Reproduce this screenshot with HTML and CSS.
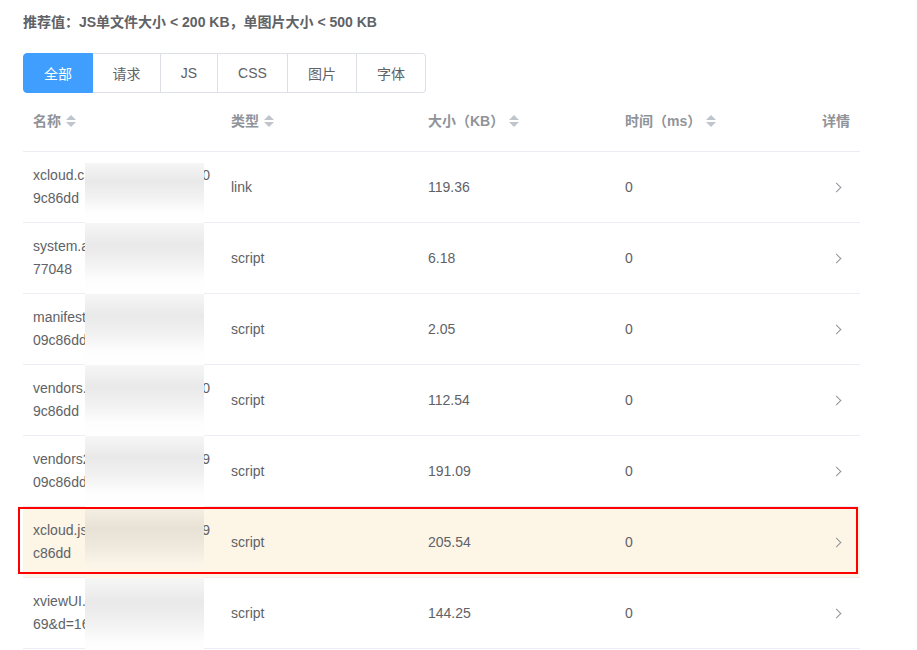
FILE: index.html
```html
<!DOCTYPE html>
<html lang="zh-CN">
<head>
    <meta charset="UTF-8">
    <title>资源列表</title>
    <link rel="stylesheet" href="styles.css">
</head>
<body>
    <div class="page">
        <p class="tip">推荐值：JS单文件大小 &lt; 200 KB，单图片大小 &lt; 500 KB</p>

        <div class="tabs">
            <button class="tab active">全部</button>
            <button class="tab">请求</button>
            <button class="tab">JS</button>
            <button class="tab">CSS</button>
            <button class="tab">图片</button>
            <button class="tab">字体</button>
        </div>

        <div class="table">
            <div class="row head">
                <div class="cell">名称 <span class="sort"></span></div>
                <div class="cell">类型 <span class="sort"></span></div>
                <div class="cell">大小（KB） <span class="sort"></span></div>
                <div class="cell">时间（ms） <span class="sort"></span></div>
                <div class="cell detail">详情</div>
            </div>

            <div class="row first">
                <div class="cell name"><div class="line"><span>xcloud.c</span><span>0</span></div><div class="line">9c86dd</div><span class="mask"></span></div>
                <div class="cell">link</div>
                <div class="cell">119.36</div>
                <div class="cell">0</div>
                <div class="cell detail"><span class="arrow"></span></div>
            </div>
            <div class="row">
                <div class="cell name"><div class="line"><span>system.a</span><span></span></div><div class="line">77048</div><span class="mask"></span></div>
                <div class="cell">script</div>
                <div class="cell">6.18</div>
                <div class="cell">0</div>
                <div class="cell detail"><span class="arrow"></span></div>
            </div>
            <div class="row">
                <div class="cell name"><div class="line"><span>manifest</span><span></span></div><div class="line">09c86dd</div><span class="mask"></span></div>
                <div class="cell">script</div>
                <div class="cell">2.05</div>
                <div class="cell">0</div>
                <div class="cell detail"><span class="arrow"></span></div>
            </div>
            <div class="row">
                <div class="cell name"><div class="line"><span>vendors.</span><span>0</span></div><div class="line">9c86dd</div><span class="mask"></span></div>
                <div class="cell">script</div>
                <div class="cell">112.54</div>
                <div class="cell">0</div>
                <div class="cell detail"><span class="arrow"></span></div>
            </div>
            <div class="row">
                <div class="cell name"><div class="line"><span>vendors2</span><span>9</span></div><div class="line">09c86dd</div><span class="mask"></span></div>
                <div class="cell">script</div>
                <div class="cell">191.09</div>
                <div class="cell">0</div>
                <div class="cell detail"><span class="arrow"></span></div>
            </div>
            <div class="row warn">
                <div class="cell name"><div class="line"><span>xcloud.js</span><span>9</span></div><div class="line">c86dd</div><span class="mask"></span></div>
                <div class="cell">script</div>
                <div class="cell">205.54</div>
                <div class="cell">0</div>
                <div class="cell detail"><span class="arrow"></span></div>
            </div>
            <div class="row">
                <div class="cell name"><div class="line"><span>xviewUI.</span><span></span></div><div class="line">69&amp;d=16</div><span class="mask"></span></div>
                <div class="cell">script</div>
                <div class="cell">144.25</div>
                <div class="cell">0</div>
                <div class="cell detail"><span class="arrow"></span></div>
            </div>
        </div>
    </div>
</body>
</html>
```

FILE: styles.css
```css
body {
    margin: 0;
    background: #fff;
    font-family: "Liberation Sans", Arial, "Noto Sans CJK SC", sans-serif;
    color: #606266;
}
.page {
    width: 837px;
    padding: 13px 0 0 23px;
}
.tip {
    margin: 0;
    font-size: 14px;
    font-weight: bold;
    line-height: 18px;
    color: #606266;
}

/* tabs */
.tabs {
    display: flex;
    margin-top: 22px;
}
.tab {
    height: 40px;
    padding: 0;
    white-space: nowrap;
    font-family: inherit;
    font-size: 14px;
    color: #606266;
    background: #fff;
    border: 1px solid #dcdfe6;
    border-left: none;
}
.tab:first-child {
    border-left: 1px solid #dcdfe6;
    border-radius: 4px 0 0 4px;
}
.tab:last-child {
    border-radius: 0 4px 4px 0;
}
.tab.active {
    width: 70px;
    color: #fff;
    background: #409eff;
    border-color: #409eff;
}
.tab:nth-child(2) { width: 68px; }
.tab:nth-child(3) { width: 57px; }
.tab:nth-child(4) { width: 70px; }
.tab:nth-child(5) { width: 69px; }
.tab:nth-child(6) { width: 69px; }

/* table */
.table {
    font-size: 14px;
}
.row {
    position: relative;
    display: grid;
    grid-template-columns: 198px 197px 197px 197px 48px;
    height: 71px;
    border-bottom: 1px solid #ebeef5;
    box-sizing: border-box;
}
.row.head {
    height: 59px;
    color: #909399;
    font-weight: bold;
}
.cell {
    position: relative;
    display: flex;
    align-items: center;
    padding: 0 10px;
    line-height: 23px;
}
.row.head .cell {
    padding-bottom: 2px;
}
.cell.name {
    flex-direction: column;
    align-items: flex-start;
    justify-content: center;
    padding-right: 9px;
}
.line {
    display: flex;
    justify-content: space-between;
    width: 177px;
    white-space: nowrap;
}
.cell.detail {
    justify-content: flex-end;
    padding-right: 10px;
}
.row:not(.head) .cell.detail {
    padding-right: 20px;
}

.sort {
    display: inline-block;
    position: relative;
    width: 10px;
    height: 14px;
    margin-left: 5px;
}
.sort::before,
.sort::after {
    content: "";
    position: absolute;
    left: 0;
    border: 5px solid transparent;
}
.sort::before {
    top: -4px;
    border-bottom-color: #c0c4cc;
}
.sort::after {
    bottom: -4px;
    border-top-color: #c0c4cc;
}

.arrow {
    width: 6px;
    height: 6px;
    border-top: 1px solid #909399;
    border-right: 1px solid #909399;
    transform: rotate(45deg);
}

/* blurred names */
.mask {
    position: absolute;
    left: 62px;
    top: 0;
    bottom: -1px;
    width: 119px;
    background: linear-gradient(to bottom, #f6f6f6 0%, #e9e9e9 30%, #f1f1f1 55%, #fdfdfd 80%, #fff 100%);
    z-index: 1;
}
.row.first .mask {
    top: 11px;
}
.row:last-child .mask {
    bottom: -10px;
}

.row.warn {
    background: #fdf5e6;
}
.row.warn .mask {
    background: linear-gradient(to bottom, #f6efe4 0%, #e8e1d6 30%, #efe8dd 55%, #fbf4e8 80%, #fdf5e6 100%);
}
.row.warn::after {
    content: "";
    position: absolute;
    left: -5px;
    right: 2px;
    top: 0;
    bottom: 3px;
    border: 2px solid #f00;
    z-index: 2;
}
```
